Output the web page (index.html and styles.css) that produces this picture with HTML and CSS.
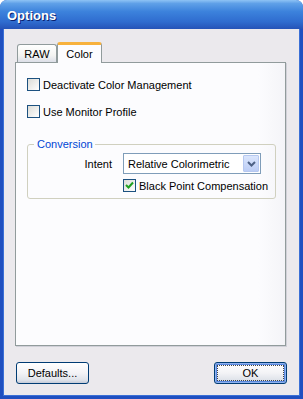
FILE: index.html
```html
<!DOCTYPE html>
<html lang="en">
<head>
    <meta charset="UTF-8" />
    <title>Options</title>
    <link rel="stylesheet" href="styles.css">
</head>
<body>
    <div class="window">
        <div class="titlebar">Options</div>

        <div class="client">
            <div class="tabs">
                <div class="tab">RAW</div>
                <div class="tab active">Color</div>
            </div>

            <div class="panel">
                <label class="check">
                    <span class="box"></span>
                    <span>Deactivate Color Management</span>
                </label>
                <label class="check">
                    <span class="box"></span>
                    <span>Use Monitor Profile</span>
                </label>

                <fieldset class="group">
                    <legend>Conversion</legend>
                    <div class="row">
                        <span class="field-label">Intent</span>
                        <div class="combo">
                            <span>Relative Colorimetric</span>
                            <span class="combo-btn">
                                <svg width="9" height="6" viewBox="0 0 9 6">
                                    <path d="M1 1 L4.5 4.5 L8 1" fill="none" stroke="#4d6185" stroke-width="2"/>
                                </svg>
                            </span>
                        </div>
                    </div>
                    <div class="row">
                        <span></span>
                        <label class="check">
                            <span class="box checked">
                                <svg width="9" height="9" viewBox="0 0 9 9">
                                    <path d="M1 4 L3.5 6.5 L8 1.5" fill="none" stroke="#21a121" stroke-width="2"/>
                                </svg>
                            </span>
                            <span>Black Point Compensation</span>
                        </label>
                    </div>
                </fieldset>
            </div>

            <div class="buttons">
                <button class="btn">Defaults...</button>
                <button class="btn default"><span>OK</span></button>
            </div>
        </div>
    </div>
</body>
</html>
```

FILE: styles.css
```css
* {
    box-sizing: border-box;
    margin: 0;
    padding: 0;
}

body {
    font-family: 'Liberation Sans', Arial, sans-serif;
    font-size: 11px;
    color: #000;
    background: #ffffff;
}

.window {
    width: 303px;
    height: 399px;
    border-radius: 7px 7px 0 0;
    background: #1f4fc0;
    display: flex;
    flex-direction: column;
    overflow: hidden;
}

.titlebar {
    height: 29px;
    padding: 8px 0 0 7px;
    font-size: 13px;
    font-weight: bold;
    color: #fff;
    text-shadow: 1px 1px 0 #0a1f6e;
    background: linear-gradient(#8ec3f5 0%, #5fa0e8 12%, #3c82dc 40%, #2f6ccf 75%, #2553b7 100%);
}

.client {
    flex: 1;
    margin: 0 3px 3px 3px;
    background: #ebe9ed;
    display: flex;
    flex-direction: column;
    border-left: 1px solid #3a6fd6;
    border-right: 1px solid #3a6fd6;
    border-bottom: 1px solid #3a6fd6;
}

/* Tabs */
.tabs {
    display: flex;
    margin: 13px 0 0 13px;
    height: 20px;
    align-items: flex-end;
    position: relative;
    z-index: 1;
}

.tab {
    width: 40px;
    height: 18px;
    padding-top: 3px;
    text-align: center;
    font-size: 11px;
    border: 1px solid #919b9c;
    border-bottom: none;
    border-radius: 3px 3px 0 0;
    background: linear-gradient(#ffffff, #f4f4f2 60%, #dcdfe8);
}

.tab.active {
    width: 45px;
    height: 21px;
    margin-bottom: -1px;
    padding-top: 3px;
    background: #fcfcfe;
    border-top: 3px solid #f7b13c;
    border-left: 1px solid #919b9c;
    border-right: 1px solid #919b9c;
}

.panel {
    margin-left: 11px;
    width: 271px;
    height: 284px;
    border: 1px solid #919b9c;
    background: linear-gradient(90deg, #fcfcfe 90%, #f4f4f8);
    box-shadow: 1px 1px 0 #d0d0d8;
    padding: 15px 0 0 11px;
    display: flex;
    flex-direction: column;
}

/* Checkboxes */
.check {
    display: flex;
    align-items: center;
    gap: 3px;
    height: 13px;
    margin-bottom: 14px;
    font-size: 11px;
    white-space: nowrap;
}

.box {
    flex: none;
    width: 13px;
    height: 13px;
    border: 1px solid #1c5180;
    background: linear-gradient(135deg, #dcdcd7, #fff);
    display: flex;
    align-items: center;
    justify-content: center;
}

/* Group box */
.group {
    margin-top: 6px;
    width: 249px;
    height: 61px;
    border: 1px solid #d0d0bf;
    border-radius: 3px;
}

.group legend {
    margin-left: 6px;
    padding: 0 2px 0 3px;
    color: #0046d5;
    font-size: 11px;
    line-height: 13px;
}

.row {
    display: grid;
    grid-template-columns: 84px 138px;
    column-gap: 11px;
    align-items: center;
}

.row:first-of-type {
    margin-top: 2px;
}

.row + .row {
    margin-top: 5px;
}

.row .check {
    margin-bottom: 0;
}

.field-label {
    text-align: right;
    font-size: 11px;
}

.combo {
    height: 21px;
    border: 1px solid #7f9db9;
    background: #fff;
    display: flex;
    align-items: center;
    justify-content: space-between;
    padding: 0 1px 0 4px;
    font-size: 11px;
}

.combo-btn {
    width: 16px;
    height: 17px;
    border: 1px solid #b6c8f0;
    border-radius: 1px;
    background: linear-gradient(#dbe6fd, #bccdf5);
    display: flex;
    align-items: center;
    justify-content: center;
}

/* Buttons */
.buttons {
    display: flex;
    justify-content: space-between;
    padding: 16px 12px 0 12px;
}

.btn {
    width: 73px;
    height: 22px;
    font-family: 'Liberation Sans', Arial, sans-serif;
    font-size: 11px;
    border: 1px solid #003c74;
    border-radius: 3px;
    background: linear-gradient(#ffffff, #f3f3f6 50%, #dfe3ea 85%, #c4cad8);
    color: #000;
}

.btn.default {
    box-shadow: inset 0 0 0 1px #8fb1ee, inset 0 0 0 2px #5a89e0;
    display: flex;
    align-items: center;
    justify-content: center;
    padding: 2px;
}

.btn.default span {
    flex: 1;
    height: 100%;
    display: flex;
    align-items: center;
    justify-content: center;
    outline: 1px dotted #444;
    outline-offset: -1px;
}
```
